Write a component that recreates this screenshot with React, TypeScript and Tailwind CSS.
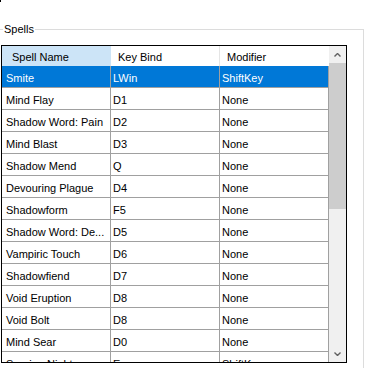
import React from "react";

const rows: [string, string, string][] = [
  ["Smite", "LWin", "ShiftKey"],
  ["Mind Flay", "D1", "None"],
  ["Shadow Word: Pain", "D2", "None"],
  ["Mind Blast", "D3", "None"],
  ["Shadow Mend", "Q", "None"],
  ["Devouring Plague", "D4", "None"],
  ["Shadowform", "F5", "None"],
  ["Shadow Word: De...", "D5", "None"],
  ["Vampiric Touch", "D6", "None"],
  ["Shadowfiend", "D7", "None"],
  ["Void Eruption", "D8", "None"],
  ["Void Bolt", "D8", "None"],
  ["Mind Sear", "D0", "None"],
  ["Searing Nightmare", "E", "ShiftKey"],
];

function Chevron({ down }: { down?: boolean }) {
  return (
    <svg width="7" height="4" viewBox="0 0 7 4" className="block">
      <path
        d={down ? "M0.5 0.5 L3.5 3.5 L6.5 0.5" : "M0.5 3.5 L3.5 0.5 L6.5 3.5"}
        fill="none"
        stroke="#606060"
        strokeWidth="1.4"
      />
    </svg>
  );
}

export default function App() {
  return (
    <div className="relative w-[369px] h-[368px] overflow-hidden bg-white pt-[29px] text-[11px] text-black font-['Liberation_Sans',Arial,sans-serif]">
      <div className="absolute left-0 top-0 w-px h-[2px] bg-black" />
      <div className="-ml-px w-[365px] h-[400px] border-t border-r border-[#dcdcdc]">
        <div className="-mt-[7px] ml-[4px] w-fit bg-white px-px leading-[13px]">Spells</div>
        <div className="mt-[9px] ml-[2px] w-[346px] h-[318px] border border-black flex overflow-hidden">
          <div className="w-[327px] flex flex-col shrink-0">
            <div className="flex h-[20px] shrink-0 bg-white">
              <div className="w-[109px] bg-[#cce4f7] pl-[10px] pt-[5px] leading-[13px]">Spell Name</div>
              <div className="w-[109px] border-r border-[#e5e5e5] pl-[7px] pt-[5px] leading-[13px]">Key Bind</div>
              <div className="w-[109px] pl-[7px] pt-[5px] leading-[13px]">Modifier</div>
            </div>
            {rows.map((r, i) => {
              const sel = i === 0;
              return (
                <div
                  key={i}
                  className={
                    sel
                      ? "flex h-[22px] shrink-0 border-b border-[#a0a0a0] bg-[#0078d7] text-white"
                      : "flex h-[22px] shrink-0 border-b border-[#a0a0a0] bg-white"
                  }
                >
                  <div className="w-[109px] shrink-0 border-r border-[#a0a0a0] pl-[4px] pt-[6px] leading-[13px] whitespace-nowrap overflow-hidden">
                    {r[0]}
                  </div>
                  <div className="w-[109px] shrink-0 border-r border-[#a0a0a0] pl-[2px] pt-[6px] leading-[13px] whitespace-nowrap overflow-hidden">
                    {r[1]}
                  </div>
                  <div className="w-[109px] shrink-0 border-r border-[#a0a0a0] pl-[2px] pt-[6px] leading-[13px] whitespace-nowrap overflow-hidden">
                    {r[2]}
                  </div>
                </div>
              );
            })}
          </div>
          <div className="w-[17px] shrink-0 flex flex-col bg-[#f0f0f0]">
            <div className="h-[17px] shrink-0 flex items-center justify-center">
              <Chevron />
            </div>
            <div className="h-[146px] shrink-0 bg-[#cdcdcd]" />
            <div className="flex-1" />
            <div className="h-[17px] shrink-0 flex items-center justify-center">
              <Chevron down />
            </div>
          </div>
        </div>
      </div>
    </div>
  );
}
